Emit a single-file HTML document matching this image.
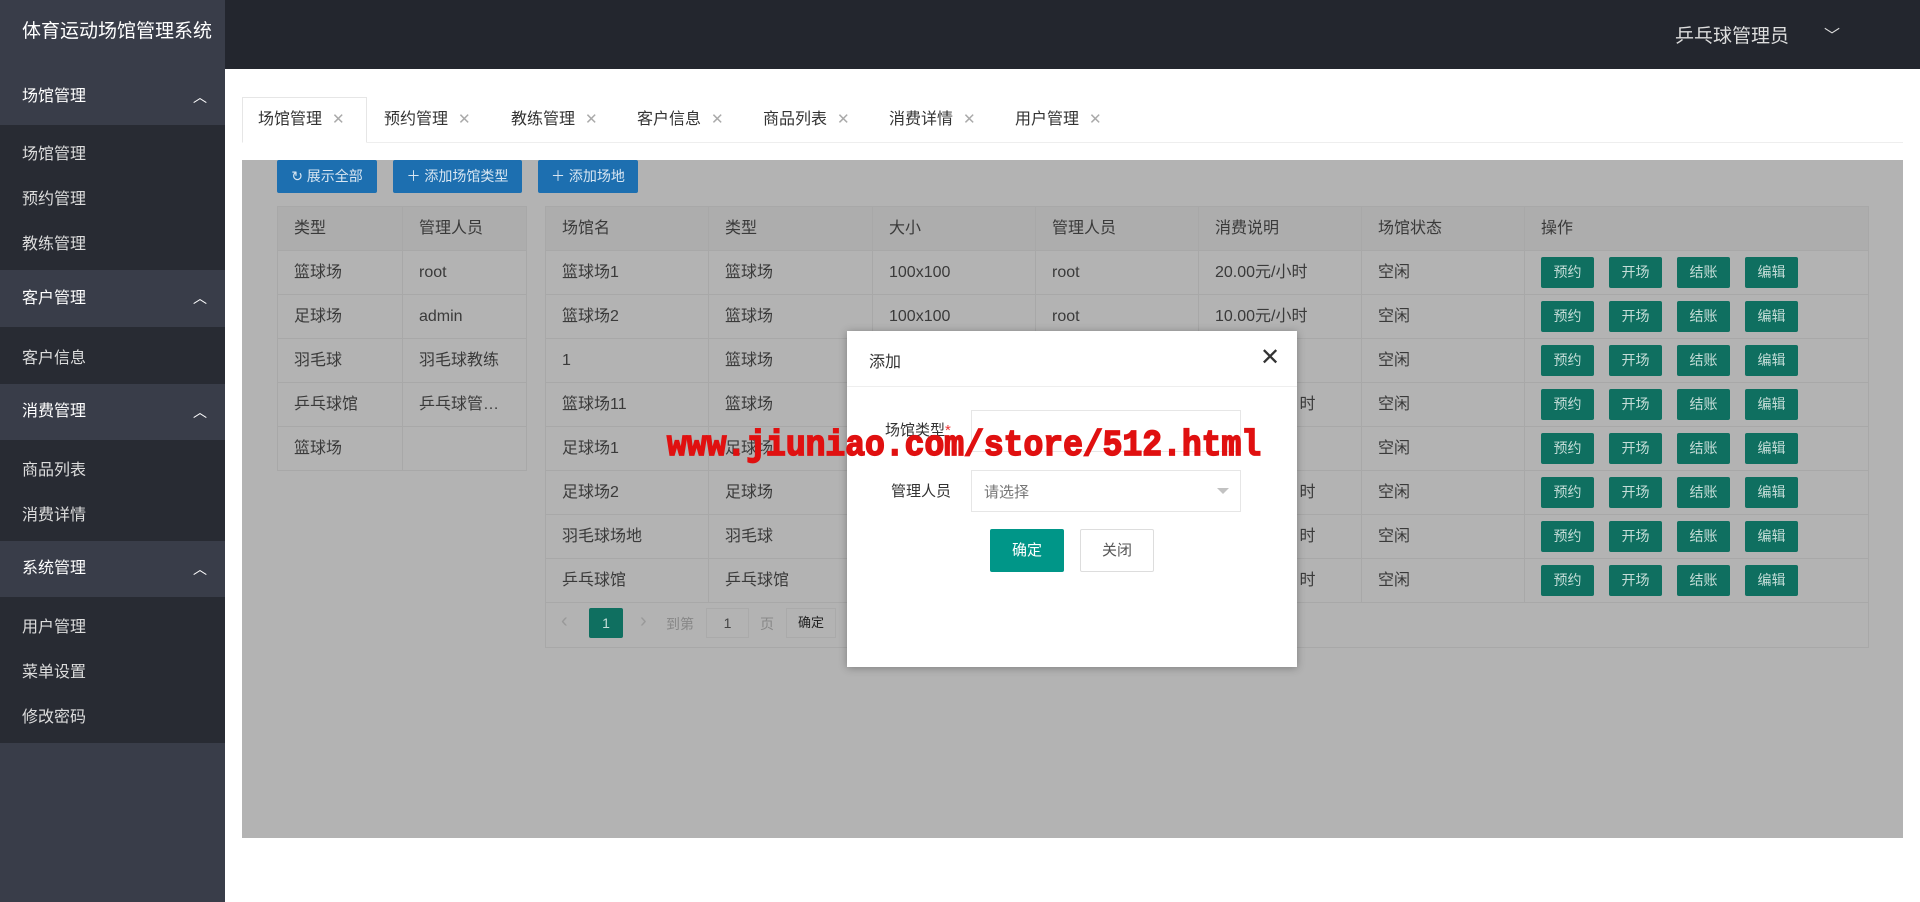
<!DOCTYPE html>
<html><head><meta charset="utf-8"><style>
*{margin:0;padding:0;box-sizing:border-box}
body{width:1920px;height:902px;position:relative;overflow:hidden;background:#fff;font-family:"Liberation Sans","Noto Sans CJK SC",sans-serif;font-size:16px;color:#333}
.a{position:absolute}
.side{left:0;top:0;width:225px;height:902px;background:#393d49}
.logo{left:0;top:0;width:225px;height:69px;background:#393d49;color:#fff;font-size:19px;line-height:64px;padding-left:22px}
.grp{left:0;width:225px;background:#393d49;color:#fff;font-size:16px;padding-left:22px}
.grp span{position:absolute;right:18px;top:0;font-size:14px}
.sec{left:0;width:225px;background:#282b33}
.it{left:22px;color:#ddd;font-size:16px}
.hdr{left:225px;top:0;width:1695px;height:69px;background:#23262e}
.tabs .t{position:absolute;top:98px;height:44px;line-height:44px;font-size:16px;color:#333}
.tabs .t i{font-style:normal;color:#aaa;margin-left:10px;font-size:15px}
.gray{left:242px;top:160px;width:1661px;height:678px;background:#b3b3b3}
.btn{height:33px;line-height:33px;color:#d8e6f2;background:#1d6fb0;font-size:14px;text-align:center;border-radius:2px}
table{border-collapse:collapse;position:absolute;font-size:16px;color:#3a3a3a}
td{border:1px solid #a8a8a8;height:44px;line-height:42px;vertical-align:middle;padding-left:16px;background:#b3b3b3;white-space:nowrap;overflow:hidden}
tr.h td{background:#adadad}
.op{display:inline-block;vertical-align:middle;width:53px;height:31px;line-height:31px;background:#0f6f60;color:#c5ddd8;text-align:center;font-size:14px;border-radius:2px;margin-right:15px}
.modal{left:847px;top:331px;width:450px;height:336px;background:#fff;box-shadow:0 1px 8px rgba(0,0,0,.3)}
</style></head><body>
<div class="a side"></div>
<div class="a logo">体育运动场馆管理系统</div>
<div class="a grp" style="top:69px;height:56px;line-height:56px">场馆管理<span>︿</span></div>
<div class="a sec" style="top:125px;height:145px"></div>
<div class="a it" style="top:140px">场馆管理</div>
<div class="a it" style="top:185px">预约管理</div>
<div class="a it" style="top:230px">教练管理</div>
<div class="a grp" style="top:270px;height:57px;line-height:57px">客户管理<span>︿</span></div>
<div class="a sec" style="top:327px;height:57px"></div>
<div class="a it" style="top:344px">客户信息</div>
<div class="a grp" style="top:384px;height:56px;line-height:56px">消费管理<span>︿</span></div>
<div class="a sec" style="top:440px;height:101px"></div>
<div class="a it" style="top:456px">商品列表</div>
<div class="a it" style="top:501px">消费详情</div>
<div class="a grp" style="top:541px;height:56px;line-height:56px">系统管理<span>︿</span></div>
<div class="a sec" style="top:597px;height:146px"></div>
<div class="a it" style="top:613px">用户管理</div>
<div class="a it" style="top:658px">菜单设置</div>
<div class="a it" style="top:703px">修改密码</div>

<div class="a hdr"></div>
<div class="a" style="left:1675px;top:21px;color:#ddd;font-size:19px">乒乓球管理员</div>
<div class="a" style="left:1824px;top:22px;color:#ddd;font-size:16px">﹀</div>

<div class="a" style="left:242px;top:142px;width:1661px;height:1px;background:#eee"></div>
<div class="a" style="left:242px;top:97px;width:125px;height:46px;border:1px solid #e6e6e6;border-bottom:1px solid #fff;background:#fff"></div>
<div class="tabs">
<div class="t" style="left:258px">场馆管理<i>✕</i></div>
<div class="t" style="left:384px">预约管理<i>✕</i></div>
<div class="t" style="left:511px">教练管理<i>✕</i></div>
<div class="t" style="left:637px">客户信息<i>✕</i></div>
<div class="t" style="left:763px">商品列表<i>✕</i></div>
<div class="t" style="left:889px">消费详情<i>✕</i></div>
<div class="t" style="left:1015px">用户管理<i>✕</i></div>
</div>

<div class="a gray"></div>
<div class="a btn" style="left:277px;top:160px;width:100px">↻ 展示全部</div>
<div class="a btn" style="left:393px;top:160px;width:129px">＋ 添加场馆类型</div>
<div class="a btn" style="left:538px;top:160px;width:100px">＋ 添加场地</div>

<table style="left:277px;top:206px;width:250px">
<tr class="h"><td style="width:125px">类型</td><td>管理人员</td></tr>
<tr><td>篮球场</td><td>root</td></tr>
<tr><td>足球场</td><td>admin</td></tr>
<tr><td>羽毛球</td><td>羽毛球教练</td></tr>
<tr><td>乒乓球馆</td><td>乒乓球管…</td></tr>
<tr><td>篮球场</td><td></td></tr>
</table>

<table style="left:545px;top:206px;width:1324px;table-layout:fixed">
<tr class="h"><td style="width:163px">场馆名</td><td style="width:164px">类型</td><td style="width:163px">大小</td><td style="width:163px">管理人员</td><td style="width:163px">消费说明</td><td style="width:163px">场馆状态</td><td>操作</td></tr>
<tr><td>篮球场1</td><td>篮球场</td><td>100x100</td><td>root</td><td>20.00元/小时</td><td>空闲</td><td><span class="op">预约</span><span class="op">开场</span><span class="op">结账</span><span class="op">编辑</span></td></tr>
<tr><td>篮球场2</td><td>篮球场</td><td>100x100</td><td>root</td><td>10.00元/小时</td><td>空闲</td><td><span class="op">预约</span><span class="op">开场</span><span class="op">结账</span><span class="op">编辑</span></td></tr>
<tr><td>1</td><td>篮球场</td><td></td><td></td><td></td><td>空闲</td><td><span class="op">预约</span><span class="op">开场</span><span class="op">结账</span><span class="op">编辑</span></td></tr>
<tr><td>篮球场11</td><td>篮球场</td><td></td><td></td><td>&nbsp;&nbsp;&nbsp;&nbsp;&nbsp;&nbsp;&nbsp;&nbsp;&nbsp;&nbsp;&nbsp;&nbsp;&nbsp;&nbsp;&nbsp;&nbsp;&nbsp;&nbsp;&nbsp;时</td><td>空闲</td><td><span class="op">预约</span><span class="op">开场</span><span class="op">结账</span><span class="op">编辑</span></td></tr>
<tr><td>足球场1</td><td>足球场</td><td></td><td></td><td></td><td>空闲</td><td><span class="op">预约</span><span class="op">开场</span><span class="op">结账</span><span class="op">编辑</span></td></tr>
<tr><td>足球场2</td><td>足球场</td><td></td><td></td><td>&nbsp;&nbsp;&nbsp;&nbsp;&nbsp;&nbsp;&nbsp;&nbsp;&nbsp;&nbsp;&nbsp;&nbsp;&nbsp;&nbsp;&nbsp;&nbsp;&nbsp;&nbsp;&nbsp;时</td><td>空闲</td><td><span class="op">预约</span><span class="op">开场</span><span class="op">结账</span><span class="op">编辑</span></td></tr>
<tr><td>羽毛球场地</td><td>羽毛球</td><td></td><td></td><td>&nbsp;&nbsp;&nbsp;&nbsp;&nbsp;&nbsp;&nbsp;&nbsp;&nbsp;&nbsp;&nbsp;&nbsp;&nbsp;&nbsp;&nbsp;&nbsp;&nbsp;&nbsp;&nbsp;时</td><td>空闲</td><td><span class="op">预约</span><span class="op">开场</span><span class="op">结账</span><span class="op">编辑</span></td></tr>
<tr><td>乒乓球馆</td><td>乒乓球馆</td><td></td><td></td><td>&nbsp;&nbsp;&nbsp;&nbsp;&nbsp;&nbsp;&nbsp;&nbsp;&nbsp;&nbsp;&nbsp;&nbsp;&nbsp;&nbsp;&nbsp;&nbsp;&nbsp;&nbsp;&nbsp;时</td><td>空闲</td><td><span class="op">预约</span><span class="op">开场</span><span class="op">结账</span><span class="op">编辑</span></td></tr>
<tr><td colspan="7" style="height:45px"></td></tr>
</table>
<div class="a" style="left:561px;top:610px;color:#999;font-size:20px">‹</div>
<div class="a" style="left:589px;top:608px;width:34px;height:30px;background:#0f6f60;color:#c5ddd8;text-align:center;line-height:30px;border-radius:2px;font-size:14px">1</div>
<div class="a" style="left:640px;top:610px;color:#999;font-size:20px">›</div>
<div class="a" style="left:666px;top:614px;color:#888;font-size:14px">到第</div>
<div class="a" style="left:706px;top:608px;width:43px;height:30px;border:1px solid #aaa;text-align:center;line-height:28px;font-size:14px;color:#444">1</div>
<div class="a" style="left:760px;top:614px;color:#888;font-size:14px">页</div>
<div class="a" style="left:786px;top:608px;width:50px;height:30px;border:1px solid #aaa;text-align:center;line-height:28px;font-size:13px;color:#222">确定</div>

<div class="a modal">
<div class="a" style="left:22px;top:17px;font-size:16px;color:#333">添加</div>
<div class="a" style="left:413px;top:12px;font-size:24px;color:#333">✕</div>
<div class="a" style="left:0;top:55px;width:450px;height:1px;background:#eee"></div>
<div class="a" style="left:38px;top:88px;font-size:15px;color:#333">场馆类型<span style="color:#e33">*</span></div>
<div class="a" style="left:124px;top:79px;width:270px;height:42px;border:1px solid #e6e6e6"></div>
<div class="a" style="left:44px;top:149px;font-size:15px;color:#333">管理人员</div>
<div class="a" style="left:124px;top:139px;width:270px;height:42px;border:1px solid #e6e6e6"></div>
<div class="a" style="left:137px;top:150px;font-size:15px;color:#777">请选择</div>
<div class="a" style="left:370px;top:157px;width:0;height:0;border:6px solid transparent;border-top-color:#c2c2c2"></div>
<div class="a" style="left:143px;top:198px;width:74px;height:43px;background:#009688;color:#fff;text-align:center;line-height:43px;font-size:15px;border-radius:2px">确定</div>
<div class="a" style="left:233px;top:198px;width:74px;height:43px;border:1px solid #ddd;color:#555;text-align:center;line-height:41px;font-size:15px;border-radius:2px">关闭</div>
</div>

<div class="a" style="left:667px;top:427px;font-family:'Liberation Mono',monospace;font-weight:bold;font-size:33px;color:#e01010;-webkit-text-stroke:1.5px #e01010;white-space:nowrap;transform:scaleY(1.1)">www.jiuniao.com/store/512.html</div>
</body></html>
